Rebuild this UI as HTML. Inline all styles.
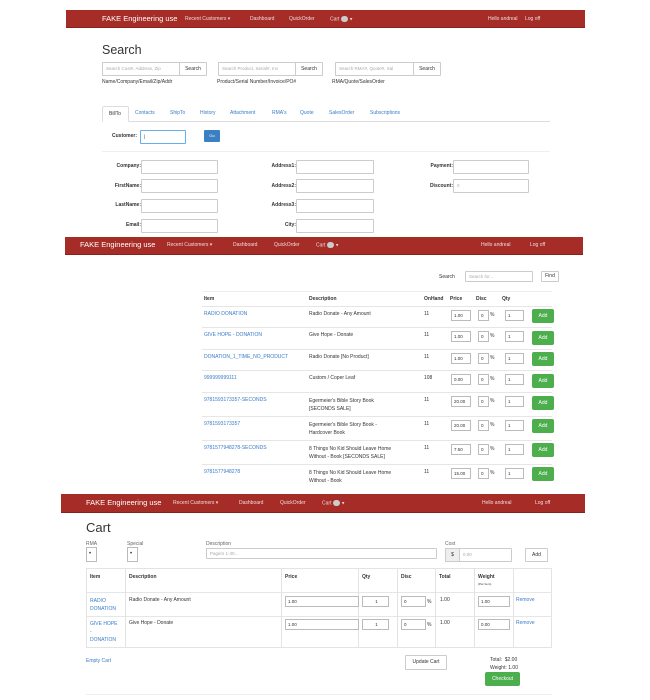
<!DOCTYPE html>
<html><head><meta charset="utf-8"><style>
*{box-sizing:border-box;margin:0;padding:0}
body{width:650px;height:700px;background:#fff;position:relative;overflow:hidden;font-family:"Liberation Sans",Arial,sans-serif;color:#333;font-size:5px}
.a{position:absolute;white-space:nowrap}
.nav{position:absolute;background:#a62c27;border-bottom:1px solid #8a201c}
.nav .a{color:#f0dcdc;font-size:5px}
.nav .b{color:#fff;font-size:7.5px}
.badge{display:inline-block;width:7px;height:6px;border-radius:3px;background:#ccc;vertical-align:middle;margin-left:2px}
.in{position:absolute;border:1px solid #ccc;background:#fff;border-radius:1px;color:#aaa;font-size:4.5px;padding-left:3px;line-height:12px;overflow:hidden;white-space:nowrap}
.btn{position:absolute;border:1px solid #ccc;background:#fff;color:#333;font-size:5px;text-align:center;border-radius:1px}
.g{position:absolute;background:#4cae4c;color:#fff;border-radius:2px;font-size:5px;text-align:center}
.l{color:#3a7bc8}
.lb{font-weight:bold;font-size:5px;text-align:right}
.hl{position:absolute;height:1px;background:#e6e6e6}
.vl{position:absolute;width:1px;background:#e3e3e3}
.si{position:absolute;border:1px solid #bbb;background:#fff;color:#333;font-size:4.5px;padding-left:2px}
</style></head><body>

<!-- NAV 1 -->
<div class="nav" style="left:66px;top:10px;width:519px;height:18px">
<div class="a b" style="left:36px;top:4px">FAKE Engineering use</div>
<div class="a" style="left:119px;top:6px">Recent Customers ▾</div>
<div class="a" style="left:184px;top:6px">Dashboard</div>
<div class="a" style="left:223px;top:6px">QuickOrder</div>
<div class="a" style="left:264px;top:6px">Cart<span class="badge"></span> ▾</div>
<div class="a" style="left:422px;top:6px">Hello andreal</div>
<div class="a" style="left:459px;top:6px">Log off</div>
</div>

<div class="a" style="left:102px;top:43px;font-size:12.5px">Search</div>
<div class="in" style="left:102px;top:62px;width:78px;height:14px">Search Cust#, Address, Zip</div>
<div class="btn" style="left:179px;top:62px;width:28px;height:14px;line-height:12px">Search</div>
<div class="in" style="left:218px;top:62px;width:78px;height:14px">Search Product, Serial#, Inv</div>
<div class="btn" style="left:295px;top:62px;width:28px;height:14px;line-height:12px">Search</div>
<div class="in" style="left:335px;top:62px;width:79px;height:14px">Search RMA#, Quote#, Sal</div>
<div class="btn" style="left:413px;top:62px;width:28px;height:14px;line-height:12px">Search</div>
<div class="a" style="left:102px;top:79px">Name/Company/Email/Zip/Addr</div>
<div class="a" style="left:217px;top:79px">Product/Serial Number/Invoice/PO#</div>
<div class="a" style="left:332px;top:79px">RMA/Quote/SalesOrder</div>

<!-- tabs -->
<div class="hl" style="left:102px;top:121px;width:448px;background:#ddd"></div>
<div class="a" style="left:102px;top:106px;width:27px;height:16px;border:1px solid #ddd;border-bottom-color:#fff;background:#fff;border-radius:2px 2px 0 0;padding:4px 0 0 6px">BillTo</div>
<div class="a l" style="left:135px;top:110px">Contacts</div>
<div class="a l" style="left:170px;top:110px">ShipTo</div>
<div class="a l" style="left:200px;top:110px">History</div>
<div class="a l" style="left:230px;top:110px">Attachment</div>
<div class="a l" style="left:272px;top:110px">RMA's</div>
<div class="a l" style="left:300px;top:110px">Quote</div>
<div class="a l" style="left:329px;top:110px">SalesOrder</div>
<div class="a l" style="left:370px;top:110px">Subscriptions</div>

<div class="a lb" style="left:112px;top:133px">Customer:</div>
<div class="in" style="left:140px;top:130px;width:46px;height:14px;border-color:#66afe9;color:#333">|</div>
<div class="a" style="left:204px;top:130px;width:16px;height:12px;background:#3b7fc4;border-radius:1px;color:#fff;font-size:4px;text-align:center;line-height:12px">Go</div>
<div class="hl" style="left:102px;top:151px;width:448px;background:#eee"></div>

<div class="a lb" style="left:88px;top:163px;width:53px">Company:</div>
<div class="a lb" style="left:88px;top:183px;width:53px">FirstName:</div>
<div class="a lb" style="left:88px;top:202px;width:53px">LastName:</div>
<div class="a lb" style="left:88px;top:222px;width:53px">Email:</div>
<div class="in" style="left:141px;top:160px;width:77px;height:14px"></div>
<div class="in" style="left:141px;top:179px;width:77px;height:14px"></div>
<div class="in" style="left:141px;top:199px;width:77px;height:14px"></div>
<div class="in" style="left:141px;top:219px;width:77px;height:14px"></div>
<div class="a lb" style="left:240px;top:163px;width:56px">Address1:</div>
<div class="a lb" style="left:240px;top:183px;width:56px">Address2:</div>
<div class="a lb" style="left:240px;top:202px;width:56px">Address3:</div>
<div class="a lb" style="left:240px;top:222px;width:56px">City:</div>
<div class="in" style="left:296px;top:160px;width:78px;height:14px"></div>
<div class="in" style="left:296px;top:179px;width:78px;height:14px"></div>
<div class="in" style="left:296px;top:199px;width:78px;height:14px"></div>
<div class="in" style="left:296px;top:219px;width:78px;height:14px"></div>
<div class="a lb" style="left:400px;top:163px;width:53px">Payment:</div>
<div class="a lb" style="left:400px;top:183px;width:53px">Discount:</div>
<div class="in" style="left:453px;top:160px;width:76px;height:14px"></div>
<div class="in" style="left:453px;top:179px;width:76px;height:14px">0</div>

<!-- NAV 2 -->
<div class="nav" style="left:65px;top:237px;width:518px;height:18px">
<div class="a b" style="left:15px;top:3px">FAKE Engineering use</div>
<div class="a" style="left:102px;top:5px">Recent Customers ▾</div>
<div class="a" style="left:168px;top:5px">Dashboard</div>
<div class="a" style="left:209px;top:5px">QuickOrder</div>
<div class="a" style="left:251px;top:5px">Cart<span class="badge"></span> ▾</div>
<div class="a" style="left:416px;top:5px">Hello andreal</div>
<div class="a" style="left:465px;top:5px">Log off</div>
</div>

<div class="a" style="left:439px;top:274px">Search</div>
<div class="in" style="left:465px;top:271px;width:68px;height:11px;line-height:9px">Search for...</div>
<div class="btn" style="left:541px;top:271px;width:18px;height:11px;line-height:9px">Find</div>

<div class="hl" style="left:202px;top:291px;width:350px;background:#eee"></div>
<div class="a lb" style="left:204px;top:296px">Item</div>
<div class="a lb" style="left:309px;top:296px">Description</div>
<div class="a lb" style="left:424px;top:296px">OnHand</div>
<div class="a lb" style="left:450px;top:296px">Price</div>
<div class="a lb" style="left:476px;top:296px">Disc</div>
<div class="a lb" style="left:502px;top:296px">Qty</div>

<div class="hl" style="left:202px;top:306px;width:350px"></div>
<div class="hl" style="left:202px;top:327px;width:350px"></div>
<div class="hl" style="left:202px;top:349px;width:350px"></div>
<div class="hl" style="left:202px;top:370px;width:350px"></div>
<div class="hl" style="left:202px;top:392px;width:350px"></div>
<div class="hl" style="left:202px;top:416px;width:350px"></div>
<div class="hl" style="left:202px;top:440px;width:350px"></div>
<div class="hl" style="left:202px;top:464px;width:350px"></div>

<!-- rows -->
<div class="a l" style="left:204px;top:311px">RADIO DONATION</div>
<div class="a" style="left:309px;top:311px">Radio Donate - Any Amount</div>
<div class="a l" style="left:204px;top:332px">GIVE HOPE - DONATION</div>
<div class="a" style="left:309px;top:332px">Give Hope - Donate</div>
<div class="a l" style="left:204px;top:354px">DONATION_1_TIME_NO_PRODUCT</div>
<div class="a" style="left:309px;top:354px">Radio Donate [No Product]</div>
<div class="a l" style="left:204px;top:375px">999999999111</div>
<div class="a" style="left:309px;top:375px">Custom / Coper Leaf</div>
<div class="a l" style="left:204px;top:397px">9781593173357-SECONDS</div>
<div class="a" style="left:309px;top:397px;line-height:8px">Egermeier's Bible Story Book<br>[SECONDS SALE]</div>
<div class="a l" style="left:204px;top:421px">9781593173357</div>
<div class="a" style="left:309px;top:421px;line-height:8px">Egermeier's Bible Story Book -<br>Hardcover Book</div>
<div class="a l" style="left:204px;top:445px">9781577948278-SECONDS</div>
<div class="a" style="left:309px;top:445px;line-height:8px">8 Things No Kid Should Leave Home<br>Without - Book [SECONDS SALE]</div>
<div class="a l" style="left:204px;top:469px">9781577948278</div>
<div class="a" style="left:309px;top:469px;line-height:8px">8 Things No Kid Should Leave Home<br>Without - Book</div>

<div class="a" style="left:424px;top:311px">11</div>
<div class="a" style="left:424px;top:332px">11</div>
<div class="a" style="left:424px;top:354px">11</div>
<div class="a" style="left:424px;top:375px">108</div>
<div class="a" style="left:424px;top:397px">11</div>
<div class="a" style="left:424px;top:421px">11</div>
<div class="a" style="left:424px;top:445px">11</div>
<div class="a" style="left:424px;top:469px">11</div>

<!-- inputs rows -->
<div class="si" style="left:451px;top:310px;width:20px;height:11px;line-height:9px">1.00</div>
<div class="si" style="left:478px;top:310px;width:11px;height:11px;line-height:9px">0</div><div class="a" style="left:490px;top:312px">%</div>
<div class="si" style="left:505px;top:310px;width:19px;height:11px;line-height:9px">1</div>
<div class="g" style="left:532px;top:309px;width:22px;height:14px;line-height:14px">Add</div>

<div class="si" style="left:451px;top:331px;width:20px;height:11px;line-height:9px">1.00</div>
<div class="si" style="left:478px;top:331px;width:11px;height:11px;line-height:9px">0</div><div class="a" style="left:490px;top:333px">%</div>
<div class="si" style="left:505px;top:331px;width:19px;height:11px;line-height:9px">1</div>
<div class="g" style="left:532px;top:331px;width:22px;height:14px;line-height:14px">Add</div>

<div class="si" style="left:451px;top:353px;width:20px;height:11px;line-height:9px">1.00</div>
<div class="si" style="left:478px;top:353px;width:11px;height:11px;line-height:9px">0</div><div class="a" style="left:490px;top:355px">%</div>
<div class="si" style="left:505px;top:353px;width:19px;height:11px;line-height:9px">1</div>
<div class="g" style="left:532px;top:352px;width:22px;height:14px;line-height:14px">Add</div>

<div class="si" style="left:451px;top:374px;width:20px;height:11px;line-height:9px">0.00</div>
<div class="si" style="left:478px;top:374px;width:11px;height:11px;line-height:9px">0</div><div class="a" style="left:490px;top:376px">%</div>
<div class="si" style="left:505px;top:374px;width:19px;height:11px;line-height:9px">1</div>
<div class="g" style="left:532px;top:374px;width:22px;height:14px;line-height:14px">Add</div>

<div class="si" style="left:451px;top:396px;width:20px;height:11px;line-height:9px">20.00</div>
<div class="si" style="left:478px;top:396px;width:11px;height:11px;line-height:9px">0</div><div class="a" style="left:490px;top:398px">%</div>
<div class="si" style="left:505px;top:396px;width:19px;height:11px;line-height:9px">1</div>
<div class="g" style="left:532px;top:396px;width:22px;height:14px;line-height:14px">Add</div>

<div class="si" style="left:451px;top:420px;width:20px;height:11px;line-height:9px">20.00</div>
<div class="si" style="left:478px;top:420px;width:11px;height:11px;line-height:9px">0</div><div class="a" style="left:490px;top:422px">%</div>
<div class="si" style="left:505px;top:420px;width:19px;height:11px;line-height:9px">1</div>
<div class="g" style="left:532px;top:419px;width:22px;height:14px;line-height:14px">Add</div>

<div class="si" style="left:451px;top:444px;width:20px;height:11px;line-height:9px">7.50</div>
<div class="si" style="left:478px;top:444px;width:11px;height:11px;line-height:9px">0</div><div class="a" style="left:490px;top:446px">%</div>
<div class="si" style="left:505px;top:444px;width:19px;height:11px;line-height:9px">1</div>
<div class="g" style="left:532px;top:443px;width:22px;height:14px;line-height:14px">Add</div>

<div class="si" style="left:451px;top:468px;width:20px;height:11px;line-height:9px">15.00</div>
<div class="si" style="left:478px;top:468px;width:11px;height:11px;line-height:9px">0</div><div class="a" style="left:490px;top:470px">%</div>
<div class="si" style="left:505px;top:468px;width:19px;height:11px;line-height:9px">1</div>
<div class="g" style="left:532px;top:467px;width:22px;height:14px;line-height:14px">Add</div>

<!-- NAV 3 -->
<div class="nav" style="left:61px;top:494px;width:524px;height:19px">
<div class="a b" style="left:25px;top:4px">FAKE Engineering use</div>
<div class="a" style="left:112px;top:6px">Recent Customers ▾</div>
<div class="a" style="left:178px;top:6px">Dashboard</div>
<div class="a" style="left:219px;top:6px">QuickOrder</div>
<div class="a" style="left:261px;top:6px">Cart<span class="badge"></span> ▾</div>
<div class="a" style="left:421px;top:6px">Hello andreal</div>
<div class="a" style="left:474px;top:6px">Log off</div>
</div>

<div class="a" style="left:86px;top:520px;font-size:13px">Cart</div>
<div class="a" style="left:86px;top:541px;color:#666">RMA</div>
<div class="a" style="left:127px;top:541px;color:#666">Special</div>
<div class="a" style="left:206px;top:541px;color:#666">Description</div>
<div class="a" style="left:445px;top:541px;color:#666">Cost</div>
<div class="si" style="left:86px;top:547px;width:11px;height:15px;line-height:13px;font-size:6px">•</div>
<div class="si" style="left:127px;top:547px;width:11px;height:15px;line-height:13px;font-size:6px">•</div>
<div class="in" style="left:206px;top:548px;width:231px;height:11px;line-height:9px">Pagers 1-30...</div>
<div class="a" style="left:445px;top:548px;width:15px;height:14px;background:#eee;border:1px solid #ccc;text-align:center;line-height:12px">$</div>
<div class="in" style="left:459px;top:548px;width:53px;height:14px">0.00</div>
<div class="btn" style="left:525px;top:548px;width:23px;height:14px;line-height:12px">Add</div>

<!-- cart table -->
<div class="a" style="left:86px;top:568px;width:466px;height:80px;border:1px solid #e3e3e3"></div>
<div class="hl" style="left:86px;top:592px;width:466px"></div>
<div class="hl" style="left:86px;top:616px;width:466px"></div>
<div class="vl" style="left:125px;top:568px;height:80px"></div>
<div class="vl" style="left:281px;top:568px;height:80px"></div>
<div class="vl" style="left:358px;top:568px;height:80px"></div>
<div class="vl" style="left:397px;top:568px;height:80px"></div>
<div class="vl" style="left:435px;top:568px;height:80px"></div>
<div class="vl" style="left:474px;top:568px;height:80px"></div>
<div class="vl" style="left:513px;top:568px;height:80px"></div>
<div class="a lb" style="left:90px;top:574px">Item</div>
<div class="a lb" style="left:129px;top:574px">Description</div>
<div class="a lb" style="left:285px;top:574px">Price</div>
<div class="a lb" style="left:362px;top:574px">Qty</div>
<div class="a lb" style="left:401px;top:574px">Disc</div>
<div class="a lb" style="left:439px;top:574px">Total</div>
<div class="a lb" style="left:478px;top:574px">Weight</div>
<div class="a" style="left:478px;top:582px;font-size:3px">(Per Item)</div>

<div class="a l" style="left:90px;top:597px;line-height:8px">RADIO<br>DONATION</div>
<div class="a" style="left:129px;top:597px">Radio Donate - Any Amount</div>
<div class="si" style="left:285px;top:596px;width:74px;height:11px;line-height:9px">1.00</div>
<div class="si" style="left:362px;top:596px;width:27px;height:11px;line-height:9px;text-align:center">1</div>
<div class="si" style="left:401px;top:596px;width:25px;height:11px;line-height:9px">0</div><div class="a" style="left:427px;top:599px">%</div>
<div class="a" style="left:440px;top:597px">1.00</div>
<div class="si" style="left:478px;top:596px;width:32px;height:11px;line-height:9px">1.00</div>
<div class="a l" style="left:516px;top:597px">Remove</div>

<div class="a l" style="left:90px;top:620px;line-height:8px">GIVE HOPE<br>-<br>DONATION</div>
<div class="a" style="left:129px;top:620px">Give Hope - Donate</div>
<div class="si" style="left:285px;top:619px;width:74px;height:11px;line-height:9px">1.00</div>
<div class="si" style="left:362px;top:619px;width:27px;height:11px;line-height:9px;text-align:center">1</div>
<div class="si" style="left:401px;top:619px;width:25px;height:11px;line-height:9px">0</div><div class="a" style="left:427px;top:622px">%</div>
<div class="a" style="left:440px;top:620px">1.00</div>
<div class="si" style="left:478px;top:619px;width:32px;height:11px;line-height:9px">0.00</div>
<div class="a l" style="left:516px;top:620px">Remove</div>

<div class="a l" style="left:86px;top:658px">Empty Cart</div>
<div class="btn" style="left:405px;top:655px;width:42px;height:15px;line-height:13px">Update Cart</div>
<div class="a" style="left:490px;top:657px">Total: &nbsp;$2.00</div>
<div class="a" style="left:490px;top:665px">Weight: 1.00</div>
<div class="g" style="left:485px;top:672px;width:35px;height:14px;line-height:14px">Checkout</div>
<div class="hl" style="left:86px;top:694px;width:466px;background:#eee"></div>
</body></html>
